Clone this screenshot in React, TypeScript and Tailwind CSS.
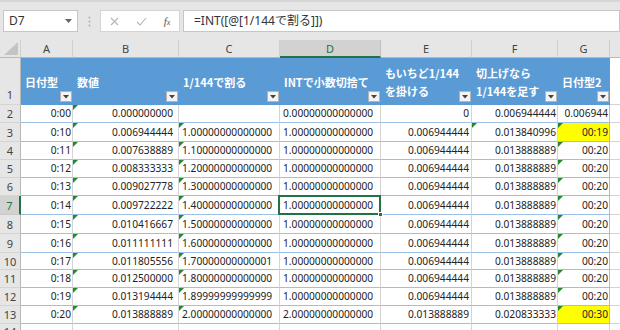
import React from "react";

const data: string[][] = [
  ["0:00", "0.000000000", "", "0.00000000000000", "0", "0.006944444", "0.006944"],
  ["0:10", "0.006944444", "1.00000000000000", "1.00000000000000", "0.006944444", "0.013840996", "00:19"],
  ["0:11", "0.007638889", "1.10000000000000", "1.00000000000000", "0.006944444", "0.013888889", "00:20"],
  ["0:12", "0.008333333", "1.20000000000000", "1.00000000000000", "0.006944444", "0.013888889", "00:20"],
  ["0:13", "0.009027778", "1.30000000000000", "1.00000000000000", "0.006944444", "0.013888889", "00:20"],
  ["0:14", "0.009722222", "1.40000000000000", "1.00000000000000", "0.006944444", "0.013888889", "00:20"],
  ["0:15", "0.010416667", "1.50000000000000", "1.00000000000000", "0.006944444", "0.013888889", "00:20"],
  ["0:16", "0.011111111", "1.60000000000000", "1.00000000000000", "0.006944444", "0.013888889", "00:20"],
  ["0:17", "0.011805556", "1.70000000000001", "1.00000000000000", "0.006944444", "0.013888889", "00:20"],
  ["0:18", "0.012500000", "1.80000000000000", "1.00000000000000", "0.006944444", "0.013888889", "00:20"],
  ["0:19", "0.013194444", "1.89999999999999", "1.00000000000000", "0.006944444", "0.013888889", "00:20"],
  ["0:20", "0.013888889", "2.00000000000000", "2.00000000000000", "0.013888889", "0.020833333", "00:30"],
];

const colPad = [
  "justify-end pr-[1px]",
  "justify-end pr-[5px]",
  "justify-start pl-[3px]",
  "justify-start pl-[3px]",
  "justify-end pr-[2px]",
  "justify-end pr-[1px]",
  "justify-end pr-[1px]",
];

const headers: string[][] = [
  ["日付型"],
  ["数値"],
  ["1/144で割る"],
  ["INTで小数切捨て"],
  ["もいちど1/144", "を掛ける"],
  ["切上げなら", "1/144を足す"],
  ["日付型2"],
];

const letters = ["A", "B", "C", "D", "E", "F", "G"];

function hasTri(r: number, c: number) {
  // r: index 0 => row 2
  if (c === 1) return true;
  if (c === 2 && r >= 1) return true;
  if (c === 5 && r === 1) return true;
  if (c === 6 && r >= 1) return true;
  return false;
}

function FilterBtn() {
  return (
    <div className="absolute right-[1px] bottom-[3px] w-[12px] h-[11px] bg-[#f4f4f4] border border-[#b4b4b4] flex items-center justify-center">
      <svg width="6" height="4" viewBox="0 0 6 4">
        <path d="M0 0 L6 0 L3 3.5 Z" fill="#444" />
      </svg>
    </div>
  );
}

function Tri() {
  return (
    <div className="absolute top-0 left-0 w-0 h-0 border-t-[5px] border-t-[#1f8a2e] border-r-[5px] border-r-transparent" />
  );
}

export default function App() {
  const rowHeights = [18, 19, 18, 18, 18, 19, 19, 19, 17, 18, 18, 18];
  return (
    <div className="w-[620px] h-[330px] overflow-hidden bg-[#e6e6e6] font-['Noto_Sans','Noto_Sans_CJK_JP',sans-serif]">
      {/* formula bar */}
      <div className="h-[40px] border-t-2 border-t-[#d6d6d6] pt-[8px] pl-[3px] flex items-start">
        <div className="w-[75px] h-[22px] bg-white border border-[#c6c6c6] flex items-center justify-between pl-[5px] pr-[5px] text-[12px] text-[#333]">
          <span>D7</span>
          <svg width="7" height="4" viewBox="0 0 7 4">
            <path d="M0 0 L7 0 L3.5 4 Z" fill="#666" />
          </svg>
        </div>
        <div className="w-[22px] h-[22px] flex items-center justify-center">
          <svg width="3" height="11" viewBox="0 0 3 11">
            <circle cx="1.5" cy="1.5" r="1" fill="#b0b0b0" />
            <circle cx="1.5" cy="5.5" r="1" fill="#b0b0b0" />
            <circle cx="1.5" cy="9.5" r="1" fill="#b0b0b0" />
          </svg>
        </div>
        <div className="w-[80px] h-[22px] bg-white border border-[#d4d4d4] flex items-center">
          <div className="w-[27px] flex justify-center">
            <svg width="9" height="9" viewBox="0 0 9 9">
              <path d="M1 1 L8 8 M8 1 L1 8" stroke="#b4b4b4" strokeWidth="1.1" />
            </svg>
          </div>
          <div className="w-[27px] flex justify-center">
            <svg width="11" height="9" viewBox="0 0 11 9">
              <path d="M1 5 L4 8 L10 1" stroke="#b4b4b4" strokeWidth="1.1" fill="none" />
            </svg>
          </div>
          <div className="w-[24px] flex justify-center items-center font-['Liberation_Serif',serif] italic text-[#555] text-[11px] leading-none">
            <span>f</span>
            <span className="text-[8px] mt-[3px]">x</span>
          </div>
        </div>
        <div className="ml-[3px] flex-1 h-[22px] bg-white border border-[#c6c6c6] flex items-center pl-[10px] text-[12px] text-[#333] font-['Noto_Sans','Noto_Sans_CJK_JP',sans-serif]">
          =INT([@[1/144で割る]])
        </div>
      </div>

      {/* grid */}
      <div className="grid grid-cols-[21px_52px_106px_101px_101px_91px_86px_52px_10px] text-[11px]">
        {/* column headers */}
        <div className="h-[18px] bg-[#e6e6e6] border-r border-b border-r-[#cfcfcf] border-b-[#b8b8b8] relative flex items-end justify-end p-[2px]">
          <svg width="14" height="13" viewBox="0 0 14 13">
            <path d="M14 0 L14 13 L0 13 Z" fill="#c4c4c4" />
          </svg>
        </div>
        {letters.map((l, i) =>
          i === 3 ? (
            <div
              key={l}
              className="h-[18px] bg-[#d2d2d2] border-r border-r-[#c0c0c0] border-b-2 border-b-[#217346] flex items-center justify-center text-[#217346] leading-none"
            >
              {l}
            </div>
          ) : (
            <div
              key={l}
              className="h-[18px] bg-[#e6e6e6] border-r border-r-[#cfcfcf] border-b border-b-[#b8b8b8] flex items-center justify-center text-[#444] leading-none"
            >
              {l}
            </div>
          )
        )}
        <div className="h-[18px] bg-[#e6e6e6] border-b border-b-[#b8b8b8]" />

        {/* row 1 header */}
        <div className="h-[47px] bg-[#e6e6e6] border-r border-b border-r-[#b8b8b8] border-b-[#d4d4d4] flex items-end justify-center pb-[1px] text-[#444] leading-[16px]">
          1
        </div>
        {headers.map((h, i) => (
          <div
            key={i}
            className="h-[47px] bg-[#5b9bd5] relative flex flex-col justify-center pl-[4px] text-white font-bold text-[11px] leading-[18px] font-['Noto_Sans_CJK_JP',sans-serif] whitespace-nowrap"
          >
            {h.map((t, j) => (
              <span key={j}>{t}</span>
            ))}
            <FilterBtn />
          </div>
        ))}
        <div className="h-[47px] bg-white border-b border-b-[#d4d4d4]" />

        {/* data rows */}
        {data.map((row, r) => {
          const h = rowHeights[r];
          const selRow = r === 5;
          return (
            <React.Fragment key={r}>
              {selRow ? (
                <div
                  style={{ height: h }}
                  className="bg-[#d2d2d2] border-r-2 border-r-[#217346] border-b border-b-[#c8c8c8] flex items-center justify-center text-[#217346] leading-none"
                >
                  {r + 2}
                </div>
              ) : (
                <div
                  style={{ height: h }}
                  className="bg-[#e6e6e6] border-r border-r-[#b8b8b8] border-b border-b-[#d4d4d4] flex items-center justify-center text-[#444] leading-none"
                >
                  {r + 2}
                </div>
              )}
              {row.map((v, c) => {
                const yellow = c === 6 && (r === 1 || r === 11);
                const sel = c === 3 && r === 5;
                return (
                  <div
                    key={c}
                    style={{ height: h }}
                    className={`relative flex items-center text-[10.2px] text-[#222] leading-none border-b border-b-[#9bc2e6] border-r ${
                      c === 6 ? "border-r-[#9bc2e6]" : "border-r-[#d4d4d4]"
                    } ${yellow ? "bg-[#ffff00]" : "bg-white"} ${colPad[c]} ${sel ? "z-10" : ""}`}
                  >
                    {v}
                    {hasTri(r, c) && <Tri />}
                    {sel && (
                      <>
                        <div className="absolute -top-[1px] -left-[2px] -right-[1px] -bottom-[1px] border-2 border-[#217346]" />
                        <div className="absolute -right-[3px] -bottom-[3px] w-[5px] h-[5px] bg-[#217346] border border-white" />
                      </>
                    )}
                  </div>
                );
              })}
              <div style={{ height: h }} className="bg-white border-b border-b-[#d4d4d4]" />
            </React.Fragment>
          );
        })}

        {/* row 14 partial */}
        <div className="h-[10px] bg-[#e6e6e6] border-r border-r-[#b8b8b8] flex justify-center text-[#444] leading-[16px]">
          14
        </div>
        {letters.map((l) => (
          <div key={l} className="h-[10px] bg-white border-r border-r-[#d4d4d4]" />
        ))}
        <div className="h-[10px] bg-white" />
      </div>
    </div>
  );
}
